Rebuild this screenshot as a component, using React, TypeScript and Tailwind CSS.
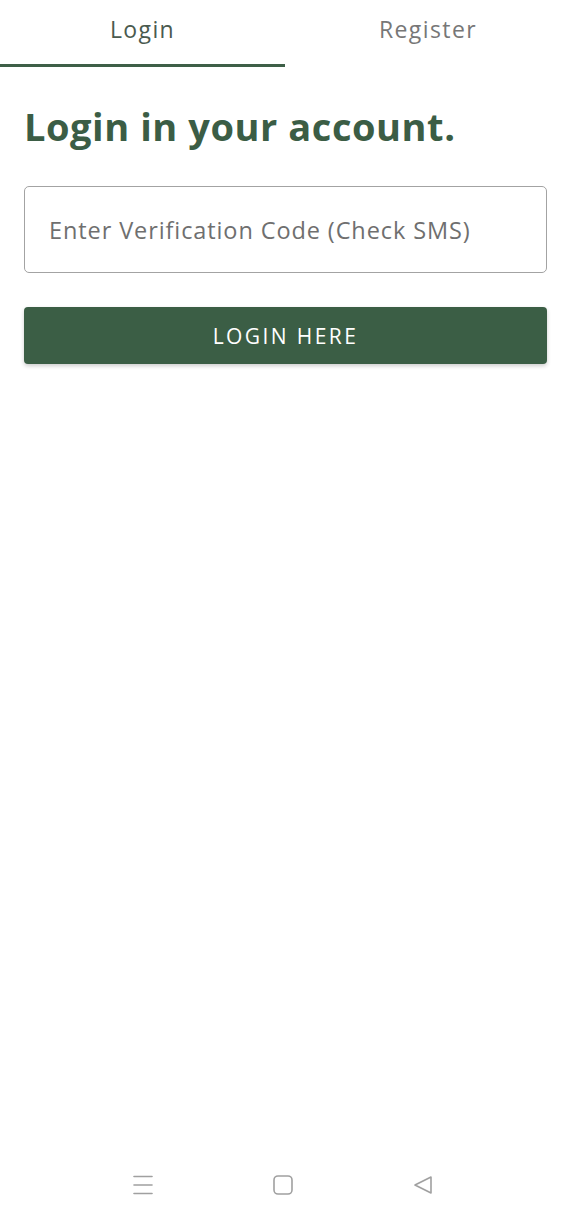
import React from "react";

export default function App() {
  return (
    <div
      className="w-[571px] h-[1220px] bg-white flex flex-col"
      style={{ fontFamily: "'Open Sans', 'Noto Sans', sans-serif" }}
    >
      {/* Tabs */}
      <div className="flex h-[67px]">
        <div className="w-[285px] flex flex-col">
          <div className="flex-1 flex items-center justify-center text-[23px] tracking-[1.4px] text-[#4a5a4f] pb-[6px]">
            Login
          </div>
          <div className="h-[3px] bg-[#3e5f47]" />
        </div>
        <div className="flex-1 flex flex-col">
          <div className="flex-1 flex items-center justify-center text-[23px] tracking-[1.4px] text-[#777777] pb-[6px]">
            Register
          </div>
          <div className="h-[3px]" />
        </div>
      </div>

      <div className="px-[24px] flex flex-col">
        <h1 className="mt-[34px] text-[38px] leading-[50px] font-bold text-[#3b5d45] tracking-[0.55px]">
          Login in your account.
        </h1>

        <div className="mt-[35px] h-[87px] border border-[#a3a3a3] rounded-[5px] flex items-center pl-[24px]">
          <span className="text-[23.5px] tracking-[0.9px] text-[#6f6f6f] pt-[2px]">
            Enter Verification Code (Check SMS)
          </span>
        </div>

        <button className="mt-[34px] h-[57px] bg-[#3b5e45] rounded-[4px] text-white text-[21px] font-medium tracking-[2.4px] shadow-[0_2px_4px_rgba(0,0,0,0.2)] flex items-center justify-center pt-[2px]">
          LOGIN HERE
        </button>
      </div>

      <div className="flex-1" />

      {/* Android nav bar */}
      <div className="h-[70px] flex justify-center items-start pt-[24px] pr-[6px] gap-[118px]">
        <svg width="22" height="22" viewBox="0 0 22 22">
          <g stroke="#a0a0a0" strokeWidth="1.6" strokeLinecap="round">
            <line x1="2" y1="2.5" x2="20" y2="2.5" />
            <line x1="2" y1="11" x2="20" y2="11" />
            <line x1="2" y1="19.5" x2="20" y2="19.5" />
          </g>
        </svg>
        <svg width="22" height="22" viewBox="0 0 22 22">
          <rect x="2" y="2" width="18" height="18" rx="4" fill="none" stroke="#a0a0a0" strokeWidth="1.6" />
        </svg>
        <svg width="22" height="22" viewBox="0 0 22 22">
          <path d="M19 3 L19 19 L3 11 Z" fill="none" stroke="#a0a0a0" strokeWidth="1.6" strokeLinejoin="round" />
        </svg>
      </div>
    </div>
  );
}
